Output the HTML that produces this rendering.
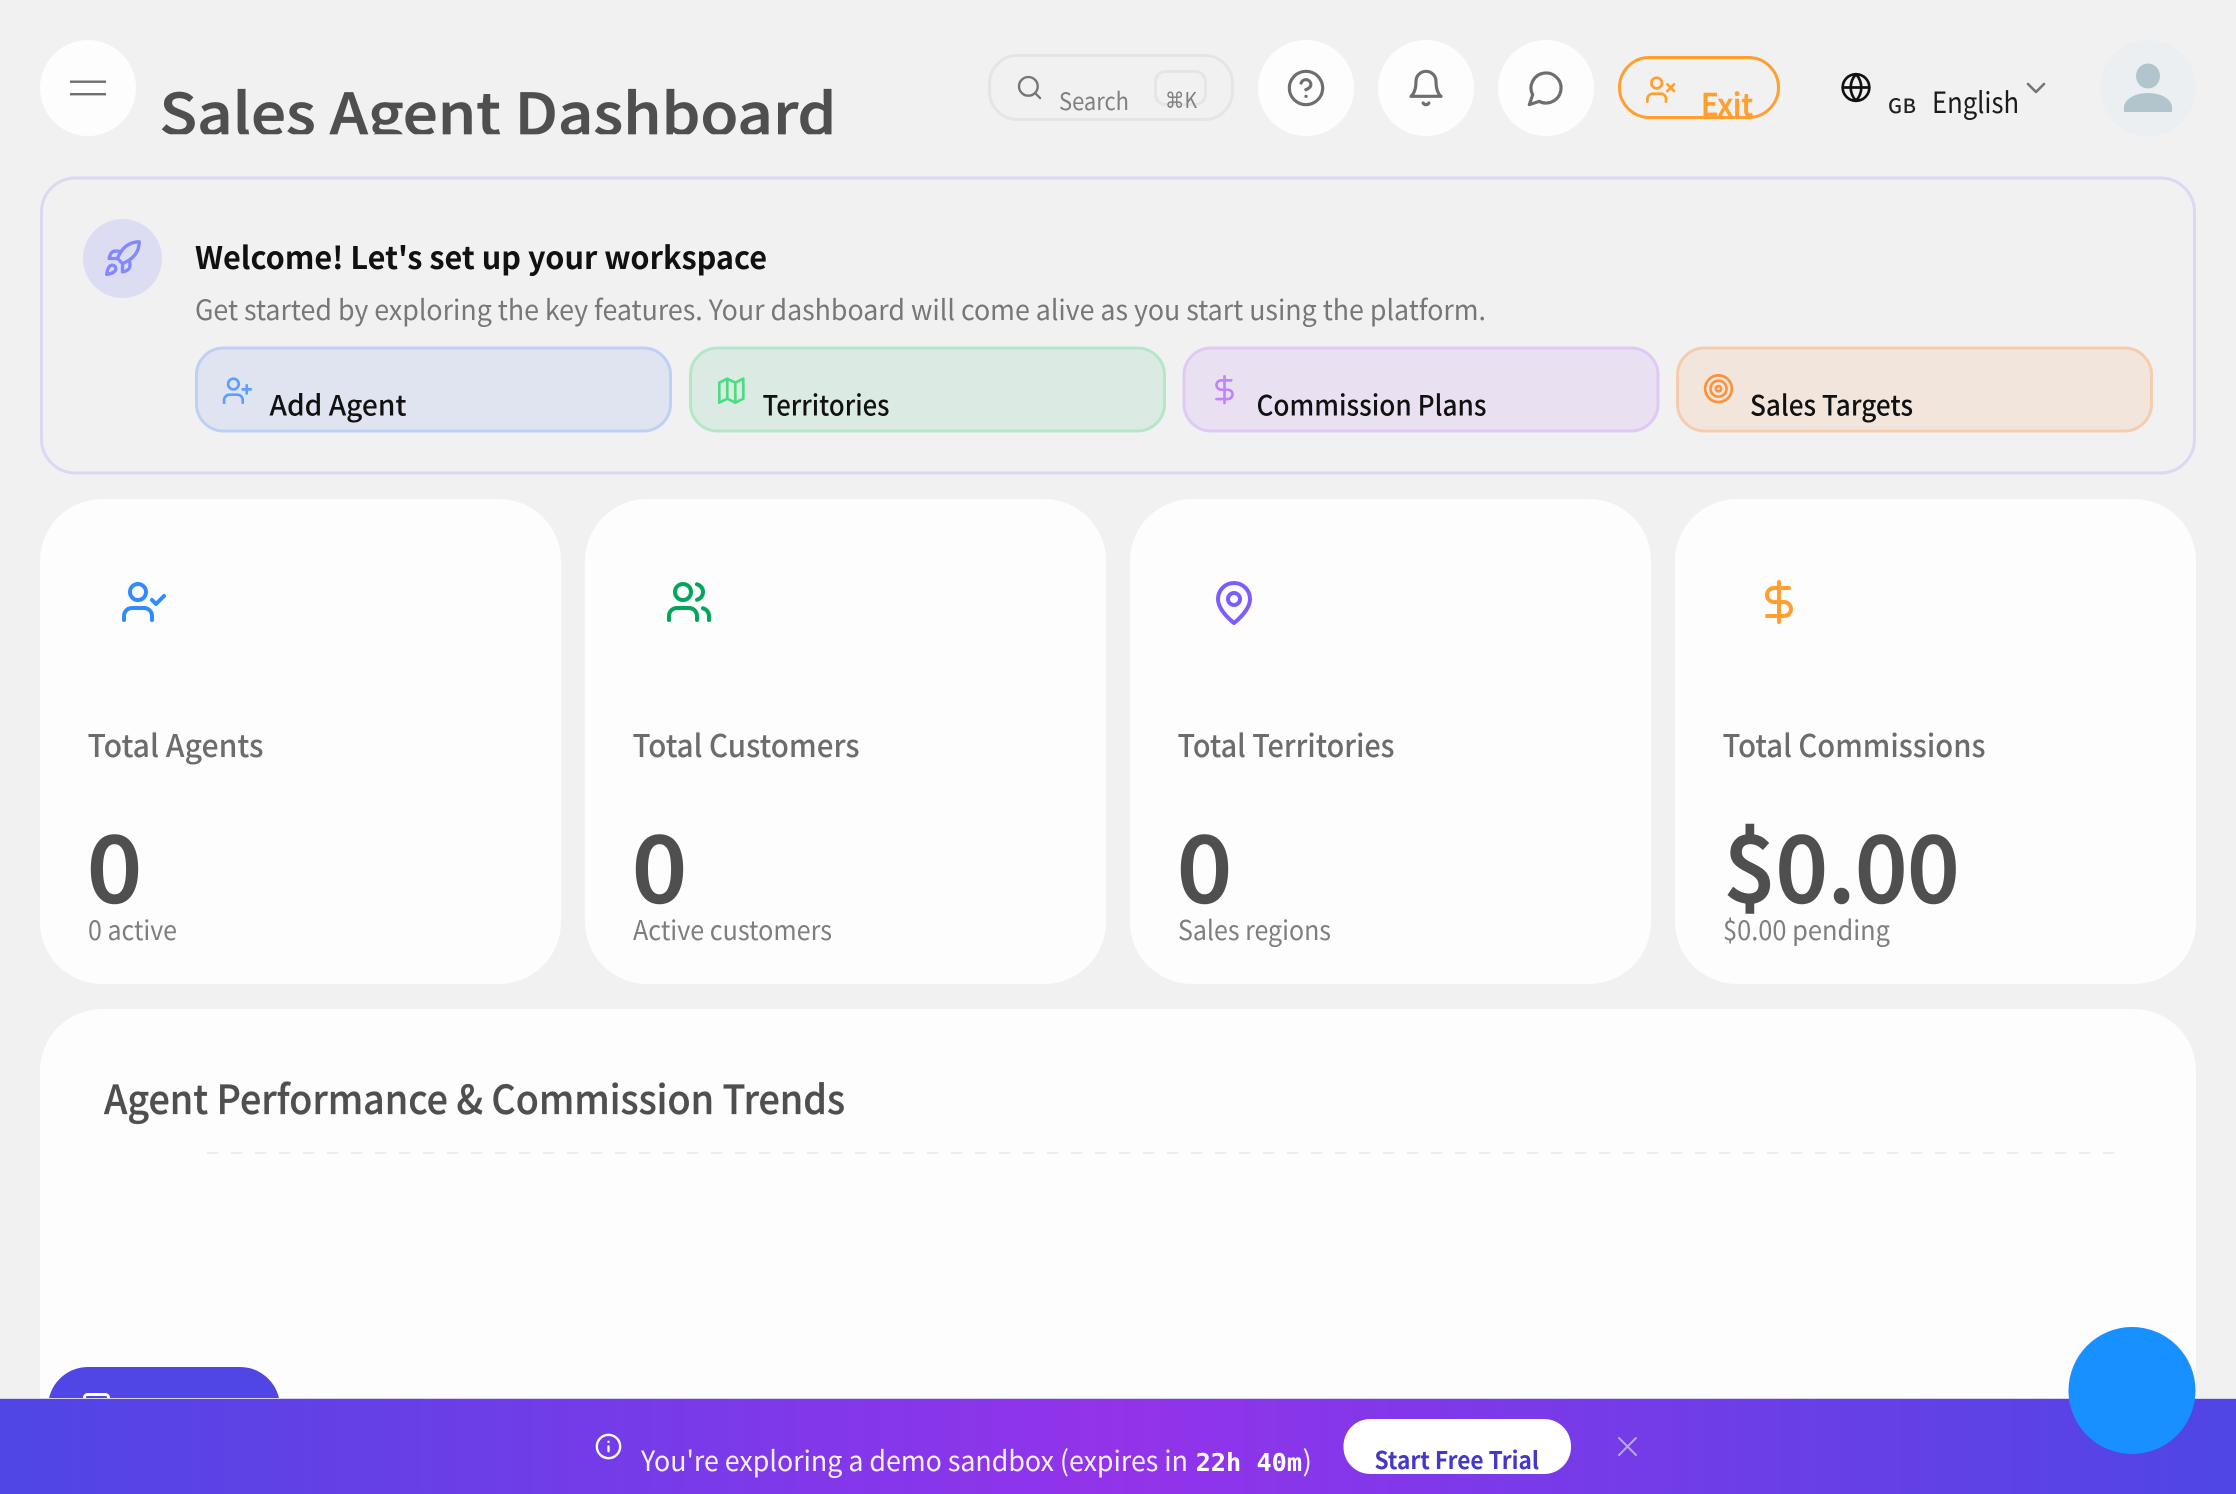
<!DOCTYPE html>
<html lang="en">
<head>
<meta charset="utf-8">
<title>Sales Agent Dashboard</title>
<style>
html,body{margin:0;padding:0;width:2236px;height:1494px;overflow:hidden;background:#f1f1f1}
svg{display:block}
text{font-family:"Noto Sans CJK JP","Liberation Sans",sans-serif;white-space:pre}
.i{fill:none;stroke-width:2;stroke-linecap:round;stroke-linejoin:round}
</style>
</head>
<body>
<svg xmlns="http://www.w3.org/2000/svg" width="2236" height="1494" viewBox="0 0 2236 1494">
<defs>
<linearGradient id="bar" x1="0" y1="0" x2="1" y2="0">
<stop offset="0" stop-color="#4f46e5"/><stop offset=".5" stop-color="#9333ea"/><stop offset="1" stop-color="#4f46e5"/>
</linearGradient>
<clipPath id="tc"><rect x="150" y="60" width="720" height="74.3"/></clipPath>
</defs>
<rect width="2236" height="1494" fill="#f1f1f1"/>

<!-- header -->
<circle cx="88" cy="88" r="48" fill="#fdfdfd"/>
<rect x="70" y="80.5" width="36" height="2.4" fill="#707070"/>
<rect x="70" y="93" width="36" height="2.4" fill="#707070"/>
<g clip-path="url(#tc)"><text x="159.5" y="134.5" font-size="57" font-weight="500" fill="#4f4f4f" stroke="#4f4f4f" stroke-width=".7" textLength="677" lengthAdjust="spacingAndGlyphs">Sales Agent Dashboard</text></g>

<rect x="989.5" y="55.5" width="243" height="64" rx="28" fill="none" stroke="#e5e5e5" stroke-width="3"/>
<g class="i" stroke="#757575" transform="translate(1015.5 73.5) scale(1.17)"><circle cx="11" cy="11" r="8"/><line x1="21" y1="21" x2="16.65" y2="16.65"/></g>
<text x="1059" y="110" font-size="24" fill="#808080" textLength="70" lengthAdjust="spacingAndGlyphs">Search</text>
<rect x="1155.5" y="71.5" width="50" height="33" rx="10" fill="none" stroke="#e5e5e5" stroke-width="3"/>
<text x="1165" y="108" font-size="22" fill="#808080" textLength="32" lengthAdjust="spacingAndGlyphs"><tspan font-family="DejaVu Sans">⌘</tspan>K</text>

<circle cx="1306" cy="88" r="48" fill="#fdfdfd"/>
<circle cx="1426" cy="88" r="48" fill="#fdfdfd"/>
<circle cx="1546" cy="88" r="48" fill="#fdfdfd"/>
<g class="i" stroke="#6e6e6e" transform="translate(1286 68) scale(1.6667)" style="stroke-width:1.9"><circle cx="12" cy="12" r="10"/><path d="M9.09 9a3 3 0 0 1 5.83 1c0 2-3 3-3 3"/><line x1="12" y1="17" x2="12.01" y2="17"/></g>
<g class="i" stroke="#6e6e6e" transform="translate(1406 68) scale(1.6667)" style="stroke-width:1.9"><path d="M6 8a6 6 0 0 1 12 0c0 7 3 9 3 9H3s3-2 3-9"/><path d="M10.3 21a1.94 1.94 0 0 0 3.4 0"/></g>
<g class="i" stroke="#6e6e6e" transform="translate(1526 68) scale(1.6667)" style="stroke-width:1.9"><path d="M7.9 20A9 9 0 1 0 4 16.1L2 22Z"/></g>

<rect x="1619.5" y="57.5" width="159" height="60" rx="30" fill="none" stroke="#ff9f2f" stroke-width="3"/>
<g class="i" stroke="#ff9f2f" transform="translate(1644.7 73.7) scale(1.3333)"><path d="M16 21v-2a4 4 0 0 0-4-4H6a4 4 0 0 0-4 4v2"/><circle cx="9" cy="7" r="4"/><line x1="17" y1="8" x2="22" y2="13"/><line x1="22" y1="8" x2="17" y2="13"/></g>
<text x="1701" y="116" font-size="31" font-weight="500" fill="#ff9f2f" stroke="#ff9f2f" stroke-width=".6" textLength="52" lengthAdjust="spacingAndGlyphs">Exit</text>

<g class="i" stroke="#111" transform="translate(1840 71.5) scale(1.3333)"><circle cx="12" cy="12" r="10"/><path d="M2 12h20"/><path d="M12 2a15.3 15.3 0 0 1 4 10 15.3 15.3 0 0 1-4 10 15.3 15.3 0 0 1-4-10 15.3 15.3 0 0 1 4-10z"/></g>
<text x="1888" y="113" font-size="20" font-weight="500" fill="#222" textLength="28" lengthAdjust="spacing">GB</text>
<text x="1932" y="113" font-size="29" fill="#1a1a1a" textLength="87" lengthAdjust="spacingAndGlyphs">English</text>
<path d="M2028 84l8 8 8-8" fill="none" stroke="#757575" stroke-width="2.6" stroke-linecap="round" stroke-linejoin="round"/>

<circle cx="2148" cy="88" r="48" fill="#ebeff1"/>
<ellipse cx="2148" cy="76" rx="12" ry="12.5" fill="#b2c5cd"/>
<path d="M2124 112v-6c2-8 12-13 24-13s22 5 24 13v6z" fill="#b2c5cd"/>

<!-- welcome banner -->
<rect x="41.5" y="178" width="2153" height="295" rx="34" fill="#f1f1f1" stroke="#d9d9f3" stroke-width="3"/>
<circle cx="122.5" cy="258.5" r="39.5" fill="#dcdcf3"/>
<g class="i" stroke="#8388fb" transform="translate(102.5 238.5) scale(1.6667)"><path d="M4.5 16.5c-1.5 1.26-2 5-2 5s3.74-.5 5-2c.71-.84.7-2.13-.09-2.91a2.18 2.18 0 0 0-2.91-.09z"/><path d="m12 15-3-3a22 22 0 0 1 2-3.95A12.88 12.88 0 0 1 22 2c0 2.72-.78 7.5-6 11a22.35 22.35 0 0 1-4 2z"/><path d="M9 12H4s.55-3.03 2-4c1.62-1.08 5 0 5 0"/><path d="M12 15v5s3.03-.55 4-2c1.08-1.62 0-5 0-5"/></g>
<text x="195" y="269" font-size="31" font-weight="700" fill="#111" textLength="572" lengthAdjust="spacingAndGlyphs">Welcome! Let's set up your workspace</text>
<text x="195" y="320" font-size="28" fill="#777" textLength="1291" lengthAdjust="spacingAndGlyphs">Get started by exploring the key features. Your dashboard will come alive as you start using the platform.</text>

<rect x="196.5" y="348" width="474" height="83" rx="27" fill="#dfe4f0" stroke="#bdd1f5" stroke-width="3"/>
<rect x="690.5" y="348" width="474" height="83" rx="27" fill="#dbebe3" stroke="#b5e6c8" stroke-width="3"/>
<rect x="1184" y="348" width="474" height="83" rx="27" fill="#e9e0f1" stroke="#e0c9f5" stroke-width="3"/>
<rect x="1677.5" y="348" width="474" height="83" rx="27" fill="#f2e5dc" stroke="#f5cdae" stroke-width="3"/>
<g class="i" stroke="#5ba0ff" transform="translate(221.4 374.7) scale(1.3333)"><path d="M16 21v-2a4 4 0 0 0-4-4H6a4 4 0 0 0-4 4v2"/><circle cx="9" cy="7" r="4"/><line x1="19" y1="8" x2="19" y2="14"/><line x1="22" y1="11" x2="16" y2="11"/></g>
<g class="i" stroke="#4ade80" transform="translate(715.3 374.7) scale(1.3333)"><polygon points="3 6 9 3 15 6 21 3 21 18 15 21 9 18 3 21"/><line x1="9" y1="3" x2="9" y2="18"/><line x1="15" y1="6" x2="15" y2="21"/></g>
<g class="i" stroke="#c084fc" transform="translate(1208.5 373.7) scale(1.3333)"><line x1="12" y1="2" x2="12" y2="22"/><path d="M17 5H9.5a3.5 3.5 0 0 0 0 7h5a3.5 3.5 0 0 1 0 7H6"/></g>
<g class="i" stroke="#fb923c" transform="translate(1702.5 372.7) scale(1.3333)"><circle cx="12" cy="12" r="10"/><circle cx="12" cy="12" r="6"/><circle cx="12" cy="12" r="2"/></g>
<text x="269.5" y="415.5" font-size="28" font-weight="500" fill="#111" textLength="137" lengthAdjust="spacingAndGlyphs">Add Agent</text>
<text x="762.5" y="415.5" font-size="28" font-weight="500" fill="#111" textLength="127" lengthAdjust="spacingAndGlyphs">Territories</text>
<text x="1256.5" y="415.5" font-size="28" font-weight="500" fill="#111" textLength="230" lengthAdjust="spacingAndGlyphs">Commission Plans</text>
<text x="1750" y="415.5" font-size="28" font-weight="500" fill="#111" textLength="163" lengthAdjust="spacingAndGlyphs">Sales Targets</text>

<!-- stat cards -->
<rect x="40" y="499" width="521" height="485" rx="62" fill="#fdfdfd"/>
<rect x="585" y="499" width="521" height="485" rx="62" fill="#fdfdfd"/>
<rect x="1130" y="499" width="521" height="485" rx="62" fill="#fdfdfd"/>
<rect x="1675" y="499" width="521" height="485" rx="62" fill="#fdfdfd"/>

<g class="i" stroke="#2f8cff" transform="translate(120 578) scale(2)"><path d="M16 21v-2a4 4 0 0 0-4-4H6a4 4 0 0 0-4 4v2"/><circle cx="9" cy="7" r="4"/><polyline points="16 11 18 13 22 9"/></g>
<g class="i" stroke="#00a65a" transform="translate(665 578) scale(2)"><path d="M16 21v-2a4 4 0 0 0-4-4H6a4 4 0 0 0-4 4v2"/><circle cx="9" cy="7" r="4"/><path d="M22 21v-2a4 4 0 0 0-3-3.87"/><path d="M16 3.13a4 4 0 0 1 0 7.75"/></g>
<g class="i" stroke="#7c5cfc" transform="translate(1210 579) scale(2)"><path d="M20 10c0 6-8 12-8 12s-8-6-8-12a8 8 0 0 1 16 0Z"/><circle cx="12" cy="10" r="3"/></g>
<g class="i" stroke="#ff9f2f" transform="translate(1755 578) scale(2)"><line x1="12" y1="2" x2="12" y2="22"/><path d="M17 5H9.5a3.5 3.5 0 0 0 0 7h5a3.5 3.5 0 0 1 0 7H6"/></g>

<text x="87.5" y="757" font-size="31" font-weight="500" fill="#6c6c6c" textLength="176" lengthAdjust="spacingAndGlyphs">Total Agents</text>
<text x="632.5" y="757" font-size="31" font-weight="500" fill="#6c6c6c" textLength="227" lengthAdjust="spacingAndGlyphs">Total Customers</text>
<text x="1177.5" y="757" font-size="31" font-weight="500" fill="#6c6c6c" textLength="217" lengthAdjust="spacingAndGlyphs">Total Territories</text>
<text x="1722.5" y="757" font-size="31" font-weight="500" fill="#6c6c6c" textLength="263" lengthAdjust="spacingAndGlyphs">Total Commissions</text>

<text x="87" y="902" font-size="92" font-weight="500" fill="#4f4f4f" stroke="#4f4f4f" stroke-width="1.4" textLength="55" lengthAdjust="spacingAndGlyphs">0</text>
<text x="632" y="902" font-size="92" font-weight="500" fill="#4f4f4f" stroke="#4f4f4f" stroke-width="1.4" textLength="55" lengthAdjust="spacingAndGlyphs">0</text>
<text x="1177" y="902" font-size="92" font-weight="500" fill="#4f4f4f" stroke="#4f4f4f" stroke-width="1.4" textLength="55" lengthAdjust="spacingAndGlyphs">0</text>
<text x="1723.5" y="902" font-size="92" font-weight="500" fill="#4f4f4f" stroke="#4f4f4f" stroke-width="1.4" textLength="236" lengthAdjust="spacingAndGlyphs">$0.00</text>

<text x="88" y="940" font-size="27" fill="#7e7e7e" textLength="89" lengthAdjust="spacingAndGlyphs">0 active</text>
<text x="633" y="940" font-size="27" fill="#7e7e7e" textLength="199" lengthAdjust="spacingAndGlyphs">Active customers</text>
<text x="1178" y="940" font-size="27" fill="#7e7e7e" textLength="153" lengthAdjust="spacingAndGlyphs">Sales regions</text>
<text x="1723" y="940" font-size="27" fill="#7e7e7e" textLength="167" lengthAdjust="spacingAndGlyphs">$0.00 pending</text>

<!-- chart card -->
<path d="M40 1494V1071a62 62 0 0 1 62-62H2134a62 62 0 0 1 62 62V1494Z" fill="#fdfdfd"/>
<text x="104" y="1114" font-size="40" font-weight="500" fill="#4f4f4f" stroke="#4f4f4f" stroke-width=".3" textLength="741" lengthAdjust="spacingAndGlyphs">Agent Performance &amp; Commission Trends</text>
<line x1="207" y1="1153" x2="2117" y2="1153" stroke="#ededed" stroke-width="2" stroke-dasharray="11 13"/>

<!-- floating pill -->
<rect x="48" y="1367" width="232" height="100" rx="40" fill="#4f46e5"/>
<rect x="84.5" y="1394.5" width="24" height="20" rx="3" fill="none" stroke="#fff" stroke-width="3"/>

<!-- sandbox bar -->
<rect x="0" y="1398" width="2236" height="1.5" fill="#d8d2f2"/>
<rect x="0" y="1399" width="2236" height="95" fill="url(#bar)"/>
<g class="i" stroke="#fff" transform="translate(594.5 1432.5) scale(1.1667)"><circle cx="12" cy="12" r="10"/><line x1="12" y1="16" x2="12" y2="12"/><line x1="12" y1="8" x2="12.01" y2="8"/></g>
<text x="641" y="1471" font-size="28" fill="#f5f0ff" textLength="547" lengthAdjust="spacingAndGlyphs">You're exploring a demo sandbox (expires in</text>
<text x="1195.6" y="1471" font-size="25" font-weight="700" fill="#fff" style="font-family:'DejaVu Sans Mono',monospace" textLength="106.5" lengthAdjust="spacingAndGlyphs">22h 40m</text>
<text x="1302.5" y="1471" font-size="28" fill="#f5f0ff">)</text>
<rect x="1343.5" y="1419" width="227.5" height="55" rx="27" fill="#fff"/>
<text x="1374.5" y="1469" font-size="24" font-weight="700" fill="#4338ca" textLength="164.5" lengthAdjust="spacingAndGlyphs">Start Free Trial</text>
<path d="M1619 1438l17 17M1636 1438l-17 17" fill="none" stroke="#b9a4ee" stroke-width="2" stroke-linecap="round"/>

<circle cx="2132" cy="1390.5" r="63.5" fill="#1890ff"/>
</svg>
</body>
</html>
